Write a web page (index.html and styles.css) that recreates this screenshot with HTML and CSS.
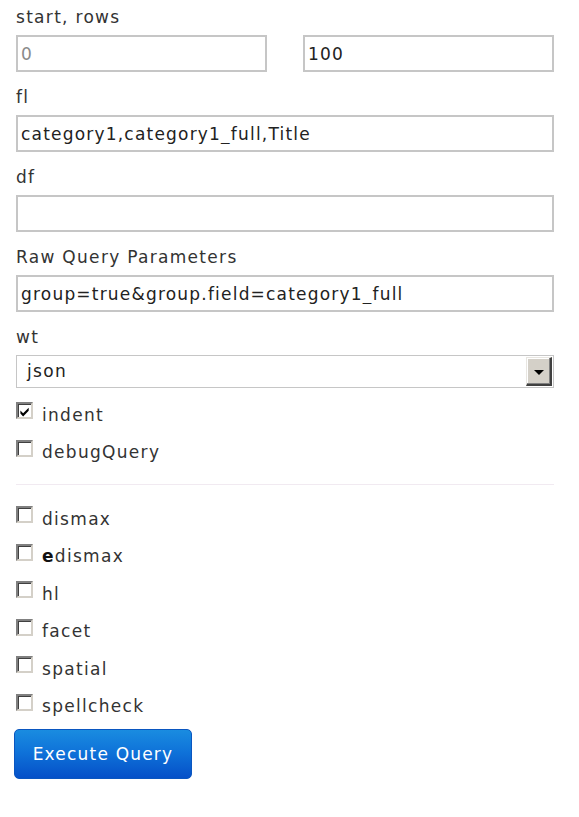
FILE: index.html
```html
<!DOCTYPE html>
<html>
<head>
<meta charset="utf-8">
<link rel="stylesheet" href="styles.css">
</head>
<body>
<form class="query-form">
  <div class="field">
    <label class="field-label">start, rows</label>
    <div class="pair">
      <input class="text-input muted" type="text" value="0">
      <input class="text-input" type="text" value="100">
    </div>
  </div>
  <div class="field">
    <label class="field-label">fl</label>
    <input class="text-input" type="text" value="category1,category1_full,Title">
  </div>
  <div class="field">
    <label class="field-label">df</label>
    <input class="text-input" type="text" value="">
  </div>
  <div class="field">
    <label class="field-label">Raw Query Parameters</label>
    <input class="text-input" type="text" value="group=true&amp;group.field=category1_full">
  </div>
  <div class="field field-select">
    <label class="field-label">wt</label>
    <div class="select">
      <span class="select-value">json</span>
      <span class="select-button"><span class="select-arrow"></span></span>
    </div>
  </div>
  <label class="check-row"><span class="box checked"><svg viewBox="0 0 13 13" width="13" height="13"><path d="M1.5 5.5 L4.5 8.5 L10.5 2.5 L10.5 5.8 L4.5 11.8 L1.5 8.8 Z" fill="#000"/></svg></span><span class="check-text">indent</span></label>
  <label class="check-row"><span class="box"></span><span class="check-text">debugQuery</span></label>
  <hr class="divider">
  <label class="check-row"><span class="box"></span><span class="check-text">dismax</span></label>
  <label class="check-row"><span class="box"></span><span class="check-text"><b class="strong">e</b>dismax</span></label>
  <label class="check-row"><span class="box"></span><span class="check-text">hl</span></label>
  <label class="check-row"><span class="box"></span><span class="check-text">facet</span></label>
  <label class="check-row"><span class="box"></span><span class="check-text">spatial</span></label>
  <label class="check-row"><span class="box"></span><span class="check-text">spellcheck</span></label>
  <button class="execute" type="button">Execute Query</button>
</form>
</body>
</html>
```
FILE: styles.css
```css
html, body {
  margin: 0;
  padding: 0;
  background: #fff;
}
body {
  font-family: "DejaVu Sans", Verdana, sans-serif;
  font-size: 17px;
  letter-spacing: 1.3px;
  color: #333;
}
.query-form {
  width: 538px;
  padding: 2px 0 0 16px;
  display: flex;
  flex-direction: column;
}
.field {
  display: flex;
  flex-direction: column;
  gap: 6px;
  margin-bottom: 10px;
}
.field-select {
  margin-bottom: 6px;
}
.field-label {
  display: block;
  box-sizing: border-box;
  padding-top: 4px;
  line-height: 23px;
  height: 27px;
  color: #333;
}
.pair {
  display: grid;
  grid-template-columns: 251px 251px;
  column-gap: 36px;
}
.text-input {
  box-sizing: border-box;
  width: 100%;
  height: 37px;
  margin: 0;
  border: 2px solid #c6c6c6;
  padding: 0 3px;
  font-family: "DejaVu Sans", Verdana, sans-serif;
  font-size: 17px;
  letter-spacing: 1.2px;
  color: #222;
  background: #fff;
  outline: none;
}
.text-input.muted {
  color: #8a8a8a;
}
.select {
  box-sizing: border-box;
  height: 33px;
  border: 1px solid #c6c6c6;
  display: flex;
  align-items: stretch;
  justify-content: space-between;
  background: #fff;
}
.select-value {
  padding-left: 10px;
  line-height: 31px;
  color: #222;
}
.select-button {
  box-sizing: border-box;
  width: 26px;
  margin: 1px;
  background: #d4d0c8;
  border-top: 1px solid #e8e6e1;
  border-left: 1px solid #e8e6e1;
  border-right: 2px solid #404040;
  border-bottom: 2px solid #404040;
  box-shadow: inset -1px -1px 0 #808080, inset 1px 1px 0 #fff;
  display: flex;
  align-items: center;
  justify-content: center;
}
.select-arrow {
  width: 0;
  height: 0;
  border-left: 5px solid transparent;
  border-right: 5px solid transparent;
  border-top: 5px solid #000;
  margin-top: 2px;
}
.check-row {
  display: flex;
  align-items: center;
  height: 37.5px;
  gap: 9px;
  color: #333;
}
.check-text {
  padding-top: 4px;
}
.box {
  box-sizing: border-box;
  width: 17px;
  height: 17px;
  margin-top: -4px;
  background: #fff;
  border-top: 2px solid #808080;
  border-left: 2px solid #808080;
  border-right: 2px solid #d4d0c8;
  border-bottom: 2px solid #d4d0c8;
  box-shadow: inset 1px 1px 0 #404040;
  display: flex;
  align-items: center;
  justify-content: center;
}
.box svg {
  display: block;
  margin: 1px 0 0 1px;
}
.strong {
  font-weight: bold;
  color: #111;
}
.divider {
  margin: 15px 0 13px;
  border: 0;
  height: 1px;
  background: #f1eaf1;
}
.execute {
  align-self: flex-start;
  margin: 6px 0 0 -2px;
  width: 178px;
  height: 50px;
  border: 1px solid #0a56c0;
  border-radius: 5px;
  background: linear-gradient(to bottom, #1a8ce0 0%, #0f73d9 45%, #0550c8 100%);
  color: #fff;
  font-family: "DejaVu Sans", Verdana, sans-serif;
  font-size: 17px;
  letter-spacing: 1.2px;
  padding: 0;
  cursor: pointer;
}
```
